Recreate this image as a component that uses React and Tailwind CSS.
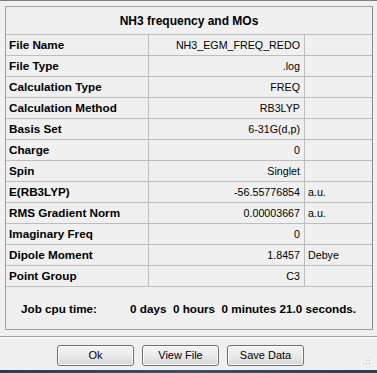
import React from "react";

const rows = [
  ["File Name", "NH3_EGM_FREQ_REDO", ""],
  ["File Type", ".log", ""],
  ["Calculation Type", "FREQ", ""],
  ["Calculation Method", "RB3LYP", ""],
  ["Basis Set", "6-31G(d,p)", ""],
  ["Charge", "0", ""],
  ["Spin", "Singlet", ""],
  ["E(RB3LYP)", "-56.55776854", "a.u."],
  ["RMS Gradient Norm", "0.00003667", "a.u."],
  ["Imaginary Freq", "0", ""],
  ["Dipole Moment", "1.8457", "Debye"],
  ["Point Group", "C3", ""],
];

function Button({ children }) {
  return (
    <button className="w-[77px] h-[21px] rounded-[3px] border border-[#707070] bg-gradient-to-b from-[#f4f4f4] via-[#ebebeb] to-[#d6d6d6] text-[11px] text-black shadow-[inset_0_0_0_1px_#fcfcfc]">
      {children}
    </button>
  );
}

export default function App() {
  return (
    <div
      className="w-[377px] h-[373px] bg-[#f0f0f0] flex flex-col text-black overflow-hidden"
      style={{ fontFamily: '"Liberation Sans", Arial, sans-serif' }}
    >
      <div className="h-px bg-[#7d8084]" />

      {/* table panel */}
      <div className="mt-[5px] ml-[5px] mr-[4px] border border-[#a0a0a0] border-r-[#888b8f]">
        <div className="h-[28px] border-b border-[#bdbdbd] flex items-center justify-center pt-[1px] text-[12px] font-bold">
          NH3 frequency and MOs
        </div>
        {rows.map(([label, value, unit]) => (
          <div key={label} className="flex h-[21px] border-b border-[#bdbdbd]">
            <div className="w-[143px] border-r border-[#bdbdbd] pl-[3px] flex items-center text-[11.7px] font-bold">
              {label}
            </div>
            <div className="w-[156px] border-r border-[#bdbdbd] pr-[4px] flex items-center justify-end text-[10.7px]">
              {value}
            </div>
            <div className="flex-1 pl-[3px] flex items-center text-[10.7px]">{unit}</div>
          </div>
        ))}
        <div className="h-[42px] flex items-center pl-[15px] pt-[2px] text-[11.7px] font-bold">
          <span className="w-[109px]">Job cpu time:</span>
          <span className="whitespace-pre">0 days  0 hours  0 minutes 21.0 seconds.</span>
        </div>
      </div>

      <div className="mt-[6px] h-[2px] border-t border-[#a0a0a0] border-b border-b-white" />

      <div className="relative flex-1 flex items-start pt-[7px] pl-[57px] gap-[8px]">
        <Button>Ok</Button>
        <Button>View File</Button>
        <Button>Save Data</Button>
        {/* resize grip */}
        <svg className="absolute right-[6px] bottom-[5px]" width="8" height="8" viewBox="0 0 8 8">
          <rect x="6" y="0" width="1" height="1" fill="#b8b8b8" />
          <rect x="3" y="3" width="1" height="1" fill="#b8b8b8" />
          <rect x="6" y="3" width="1" height="1" fill="#b8b8b8" />
          <rect x="0" y="6" width="1" height="1" fill="#b8b8b8" />
          <rect x="3" y="6" width="1" height="1" fill="#b8b8b8" />
          <rect x="6" y="6" width="1" height="1" fill="#b8b8b8" />
        </svg>
      </div>

      <div className="h-[3px] bg-gradient-to-r from-[#2c3d4e] via-[#3b5366] to-[#2c3d4e]" />
    </div>
  );
}
